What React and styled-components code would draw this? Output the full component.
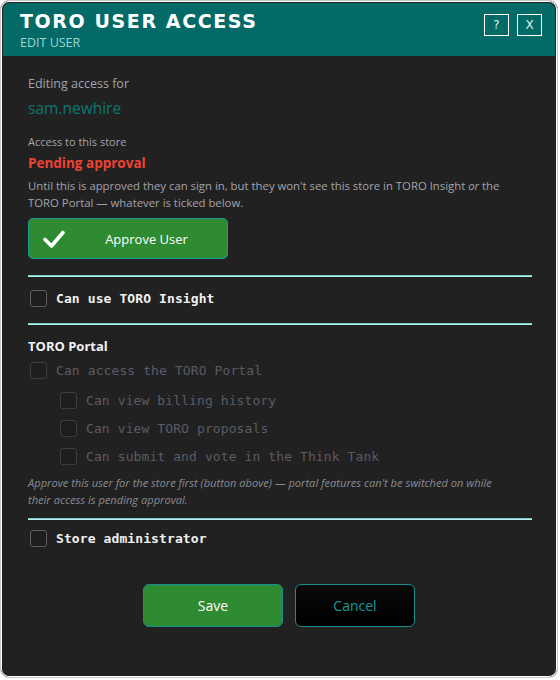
import styled, { createGlobalStyle } from 'styled-components'

const GlobalStyle = createGlobalStyle`
  html, body {
    margin: 0;
    padding: 0;
    background: #ffffff;
  }
  body {
    font-family: "Open Sans", "Noto Sans", sans-serif;
  }
`

const CheckIcon = () => (
  <svg width="24" height="20" viewBox="0 0 24 20">
    <path d="M3 10.5 L9.5 17 L21 3.5" fill="none" stroke="#ffffff" strokeWidth="3.6" strokeLinecap="round" strokeLinejoin="round" />
  </svg>
)

export default function App() {
  return (
    <>
      <GlobalStyle />
      <Window>
        <Header>
          <TitleBlock>
            <Title>TORO USER ACCESS</Title>
            <Subtitle>EDIT USER</Subtitle>
          </TitleBlock>
          <HeaderButtons>
            <HeaderButton>?</HeaderButton>
            <HeaderButton>X</HeaderButton>
          </HeaderButtons>
        </Header>

        <Body>
          <Label>Editing access for</Label>
          <UserName>sam.newhire</UserName>

          <SmallLabel>Access to this store</SmallLabel>
          <Status>Pending approval</Status>
          <Help>
            Until this is approved they can sign in, but they won't see this store in TORO Insight <em>or</em> the
            <br />
            TORO Portal — whatever is ticked below.
          </Help>

          <ApproveButton>
            <CheckIcon />
            <span>Approve User</span>
          </ApproveButton>

          <Divider $top={16} />
          <CheckRow $top={11}>
            <Box />
            <CheckLabel>Can use TORO Insight</CheckLabel>
          </CheckRow>
          <Divider $top={15} />

          <SectionTitle>TORO Portal</SectionTitle>
          <CheckRow $disabled>
            <Box $disabled />
            <CheckLabel $disabled>Can access the TORO Portal</CheckLabel>
          </CheckRow>
          <SubList>
            <CheckRow $disabled $sub>
              <Box $disabled />
              <CheckLabel $disabled>Can view billing history</CheckLabel>
            </CheckRow>
            <CheckRow $disabled $sub>
              <Box $disabled />
              <CheckLabel $disabled>Can view TORO proposals</CheckLabel>
            </CheckRow>
            <CheckRow $disabled $sub>
              <Box $disabled />
              <CheckLabel $disabled>Can submit and vote in the Think Tank</CheckLabel>
            </CheckRow>
          </SubList>
          <Note>
            Approve this user for the store first (button above) — portal features can't be switched on while
            <br />
            their access is pending approval.
          </Note>

          <Divider $top={10} />
          <CheckRow $top={8}>
            <Box />
            <CheckLabel>Store administrator</CheckLabel>
          </CheckRow>

          <Actions>
            <SaveButton>Save</SaveButton>
            <CancelButton>Cancel</CancelButton>
          </Actions>
        </Body>
      </Window>
    </>
  )
}

const Window = styled.div`
  width: 558px;
  height: 678px;
  box-sizing: border-box;
  border: 1px solid #c8c8c8;
  box-shadow: inset 0 0 0 1px #ffffff;
  border-radius: 9px;
  background: #212121;
  overflow: hidden;
  display: flex;
  flex-direction: column;
`

const Header = styled.div`
  height: 53px;
  background: #036a67;
  display: flex;
  justify-content: space-between;
  align-items: flex-start;
  padding: 0 13px 0 17px;
  margin: 2px 2px 0 2px;
  border-radius: 7px 7px 0 0;
`

const TitleBlock = styled.div`
  display: flex;
  flex-direction: column;
  padding-top: 7px;
`

const Title = styled.div`
  font-family: "DejaVu Sans", "Liberation Sans", sans-serif;
  font-weight: bold;
  font-size: 19px;
  color: #ffffff;
  letter-spacing: 1.6px;
  line-height: 22px;
`

const Subtitle = styled.div`
  font-size: 12.5px;
  color: #9fd6d2;
  line-height: 18px;
  margin-top: 2px;
`

const HeaderButtons = styled.div`
  display: flex;
  gap: 8px;
  padding-top: 11px;
`

const HeaderButton = styled.div`
  width: 23px;
  height: 20px;
  border: 1.5px solid #ffffff;
  color: #d8f0ee;
  font-family: "DejaVu Sans", sans-serif;
  font-size: 12px;
  display: flex;
  align-items: center;
  justify-content: center;
`

const Body = styled.div`
  padding: 19px 25px 0 27px;
  display: flex;
  flex-direction: column;
`

const Label = styled.div`
  font-size: 12.5px;
  color: #a3a3ad;
  line-height: 18px;
`

const UserName = styled.div`
  font-size: 15.5px;
  color: #0b7672;
  line-height: 22px;
  margin-top: 4px;
`

const SmallLabel = styled.div`
  font-size: 11px;
  color: #a3a3ad;
  line-height: 16px;
  margin-top: 15px;
`

const Status = styled.div`
  font-size: 13.5px;
  font-weight: bold;
  color: #ef4135;
  line-height: 20px;
  margin-top: 3px;
`

const Help = styled.div`
  font-size: 11.35px;
  color: #a3a3ad;
  line-height: 17px;
  margin-top: 4px;
  white-space: nowrap;

  em {
    font-style: italic;
  }
`

const ApproveButton = styled.div`
  width: 200px;
  height: 41px;
  box-sizing: border-box;
  margin-top: 7px;
  background: #2e8b32;
  border: 1px solid #1b9a96;
  border-radius: 5px;
  display: flex;
  align-items: center;
  padding-left: 13px;
  color: #ffffff;
  font-size: 13px;

  span {
    flex: 1;
    text-align: center;
  }
`

const Divider = styled.div`
  height: 2px;
  background: linear-gradient(#4fc6cc, #e6f4f4);
  margin-top: ${(p) => p.$top}px;
`

const CheckRow = styled.div`
  display: flex;
  align-items: center;
  gap: 9px;
  height: 20px;
  padding-left: 2px;
  margin-top: ${(p) => (p.$top ? `${p.$top}px` : '0')};
  margin-bottom: ${(p) => (p.$sub ? '8px' : '0')};
`

const Box = styled.div`
  width: 17px;
  height: 17px;
  box-sizing: border-box;
  border: 1px solid ${(p) => (p.$disabled ? '#3c3c45' : '#5c5c68')};
  border-radius: 3px;
  background: #1e1e1e;
`

const CheckLabel = styled.div`
  font-family: "DejaVu Sans Mono", "Liberation Mono", monospace;
  font-size: 13px;
  font-weight: ${(p) => (p.$disabled ? 'normal' : 'bold')};
  color: ${(p) => (p.$disabled ? '#5b5b66' : '#f0f0f0')};
  letter-spacing: 0.1px;
`

const SectionTitle = styled.div`
  font-size: 13px;
  font-weight: bold;
  color: #f2f2f2;
  line-height: 18px;
  margin-top: 12px;
  margin-bottom: 5px;
`

const SubList = styled.div`
  display: flex;
  flex-direction: column;
  padding-left: 30px;
  margin-top: 10px;
`

const Note = styled.div`
  font-size: 11.1px;
  font-style: italic;
  color: #8a8a92;
  line-height: 17px;
  white-space: nowrap;
`

const Actions = styled.div`
  display: flex;
  justify-content: center;
  gap: 12px;
  margin-top: 36px;
  padding-right: 2px;
`

const BaseButton = styled.div`
  height: 43px;
  box-sizing: border-box;
  border-radius: 6px;
  border: 1px solid #178f8c;
  display: flex;
  align-items: center;
  justify-content: center;
  font-size: 14px;
`

const SaveButton = styled(BaseButton)`
  width: 140px;
  background: #2e8b32;
  color: #ffffff;
`

const CancelButton = styled(BaseButton)`
  width: 120px;
  background: linear-gradient(#0a0a0a, #000000);
  color: #1a9a96;
`
